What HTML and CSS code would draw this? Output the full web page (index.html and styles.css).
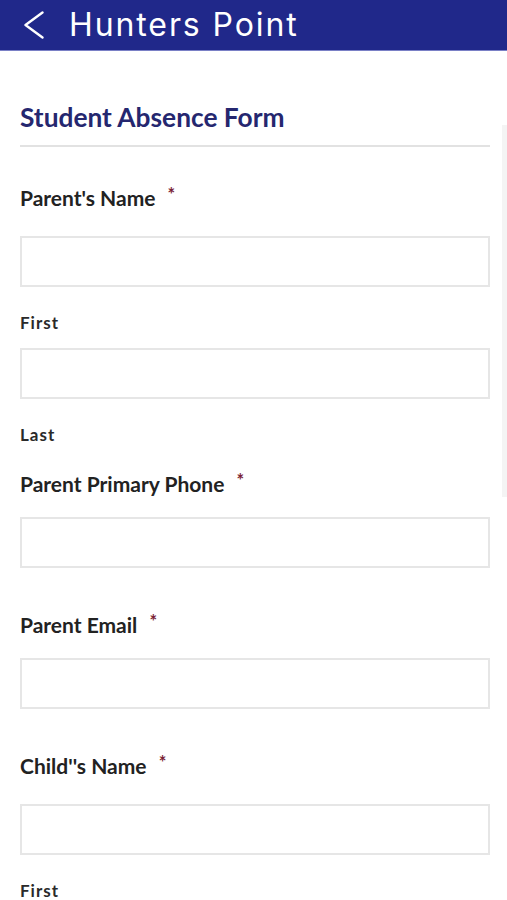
FILE: index.html
```html
<!DOCTYPE html>
<html lang="en">
<head>
<meta charset="utf-8">
<title>Hunters Point</title>
<link rel="stylesheet" href="styles.css">
</head>
<body>
<header class="topbar">
  <svg class="back" width="20" height="28" viewBox="0 0 20 28" aria-hidden="true">
    <polyline points="18.5,1.5 1.5,14 18.5,26.5" fill="none" stroke="#ffffff" stroke-width="2.4" stroke-linecap="round" stroke-linejoin="round"/>
  </svg>
  <h1 class="topbar-title">Hunters Point</h1>
</header>
<div class="scroll-indicator"></div>
<main class="content">
  <h2 class="form-title">Student Absence Form</h2>
  <form class="form">
    <div class="field field-name">
      <label class="label">Parent's Name <span class="req">*</span></label>
      <input class="input" type="text">
      <span class="sublabel">First</span>
      <input class="input input-next" type="text">
      <span class="sublabel">Last</span>
    </div>
    <div class="field field-simple">
      <label class="label">Parent Primary Phone <span class="req">*</span></label>
      <input class="input" type="tel">
    </div>
    <div class="field field-simple">
      <label class="label">Parent Email <span class="req">*</span></label>
      <input class="input" type="email">
    </div>
    <div class="field field-name">
      <label class="label">Child''s Name <span class="req">*</span></label>
      <input class="input" type="text">
      <span class="sublabel">First</span>
    </div>
  </form>
</main>
</body>
</html>
```

FILE: styles.css
```css
html, body {
  margin: 0;
  padding: 0;
  background: #ffffff;
}

body {
  font-family: Lato, "Open Sans", Arial, sans-serif;
  color: #222222;
  overflow: hidden;
}

.topbar {
  height: 50px;
  background: #20288a;
  border-bottom: 1px solid #7a80c6;
  display: flex;
  align-items: center;
  padding-left: 24px;
  gap: 25px;
}

.back {
  display: block;
  margin-top: -1px;
}

.topbar-title {
  margin: 0;
  font-family: Inter, "Noto Sans", sans-serif;
  font-weight: 400;
  font-size: 32px;
  line-height: 52px;
  letter-spacing: 1.9px;
  color: #ffffff;
}

.scroll-indicator {
  position: absolute;
  top: 125px;
  right: 0;
  width: 5px;
  height: 372px;
  background: #f4f4f4;
}

.content {
  padding: 0 17px 0 20px;
}

.form-title {
  margin: 50px 0 0;
  padding-bottom: 12px;
  border-bottom: 2px solid #e2e2e2;
  font-size: 26.3px;
  line-height: 32px;
  font-weight: 700;
  color: #25276f;
}

.form {
  display: flex;
  flex-direction: column;
  padding-top: 38px;
}

.field {
  display: flex;
  flex-direction: column;
}

.field-name {
  margin-bottom: 25px;
}

.field-simple {
  margin-bottom: 44px;
}

.label {
  font-size: 21px;
  line-height: 26px;
  font-weight: 700;
  color: #222222;
}

.field-name .label {
  margin-bottom: 25px;
}

.field-simple .label {
  margin-bottom: 20px;
}

.req {
  font-size: 18px;
  line-height: 18px;
  color: #7b1f35;
  vertical-align: top;
  margin-left: 7px;
}

.input {
  box-sizing: border-box;
  height: 51px;
  width: 100%;
  margin: 0;
  border: 2px solid #e6e6e6;
  background: #ffffff;
  font: inherit;
}

.input-next {
  margin-top: 14px;
}

.sublabel {
  margin-top: 25px;
  font-size: 17px;
  line-height: 22px;
  font-weight: 700;
  letter-spacing: 1px;
  color: #2a2a2a;
}
```
